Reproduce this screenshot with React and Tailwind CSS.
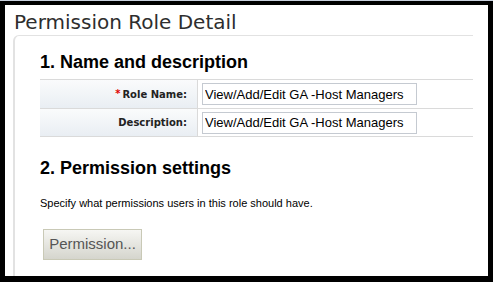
import React from 'react';

const Row = ({ label, required, value, last }) => (
  <div className={`flex h-[29px] border-t border-[#dadada] ${last ? 'border-b' : ''}`}>
    <div className="w-[158px] shrink-0 border-r border-[#dadada] bg-gradient-to-b from-[#fafbfc] to-[#e9eef3] flex items-center justify-end pr-[10px] font-['DejaVu_Sans',sans-serif] text-[10px] font-bold text-[#222]">
      {required && <span className="text-[#e00000] mr-[2px] text-[10px] relative -top-[1px]">*</span>}
      {label}
    </div>
    <div className="flex items-center pl-[4px]">
      <input
        readOnly
        value={value}
        className="w-[215px] h-[22px] border border-[#c5cad1] px-[2px] font-['Liberation_Sans',Arial,sans-serif] text-[13px] text-black outline-none"
      />
    </div>
  </div>
);

const App = () => {
  return (
    <div className="w-[493px] h-[282px] flex flex-col border-t border-[#c9d1de] overflow-hidden">
      <div className="flex-1 flex flex-col bg-white border-black border-t-4 border-l-[5px] border-r-[5px] border-b-[6px] min-h-0">
        <h1 className="pl-[9px] pt-[4px] h-[30px] font-['DejaVu_Sans',sans-serif] text-[20px] leading-[26px] text-[#2e2e2e]">
          Permission Role Detail
        </h1>
        <div className="flex-1 ml-[8px] mr-[15px] border-t border-l-2 border-[#e2e2e2] rounded-tl-[6px] pl-[25px] min-h-0">
          <h2 className="mt-[15px] font-['Liberation_Sans',Arial,sans-serif] font-bold text-[18px] leading-[22px] text-black">
            1. Name and description
          </h2>
          <div className="mt-[6px]">
            <Row label="Role Name:" required value="View/Add/Edit GA -Host Managers" />
            <Row label="Description:" value="View/Add/Edit GA -Host Managers" last />
          </div>
          <h2 className="mt-[20px] font-['Liberation_Sans',Arial,sans-serif] font-bold text-[18px] leading-[22px] text-black">
            2. Permission settings
          </h2>
          <p className="mt-[18px] font-['Liberation_Sans',Arial,sans-serif] text-[11px] leading-[13px] text-black">
            Specify what permissions users in this role should have.
          </p>
          <button
            type="button"
            className="mt-[19px] ml-[3px] w-[99px] h-[31px] border border-[#c9c9b6] bg-gradient-to-b from-[#f6f6f3] to-[#d5d5cd] font-['Liberation_Sans',Arial,sans-serif] text-[15px] text-[#555]"
          >
            Permission...
          </button>
        </div>
      </div>
    </div>
  );
};

export default App;
